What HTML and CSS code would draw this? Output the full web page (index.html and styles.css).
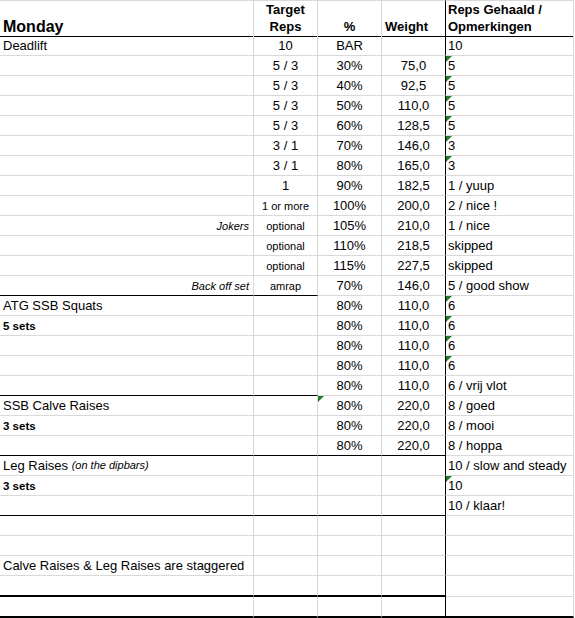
FILE: index.html
```html
<!DOCTYPE html>
<html>
<head>
<meta charset="utf-8">
<link rel="stylesheet" href="styles.css">
</head>
<body>
<div class="sheet">
  <div class="row head">
    <div class="c a title">Monday</div>
    <div class="c b hd ctr">Target<br>Reps</div>
    <div class="c cc hd ctr">%</div>
    <div class="c d hd">Weight</div>
    <div class="c e hd">Reps Gehaald /<br>Opmerkingen</div>
  </div>

  <div class="row">
    <div class="c a">Deadlift</div>
    <div class="c b ctr">10</div>
    <div class="c cc ctr">BAR</div>
    <div class="c d ctr"></div>
    <div class="c e">10</div>
  </div>
  <div class="row">
    <div class="c a"></div>
    <div class="c b ctr">5 / 3</div>
    <div class="c cc ctr">30%</div>
    <div class="c d ctr">75,0</div>
    <div class="c e"><span class="tri"></span>5</div>
  </div>
  <div class="row">
    <div class="c a"></div>
    <div class="c b ctr">5 / 3</div>
    <div class="c cc ctr">40%</div>
    <div class="c d ctr">92,5</div>
    <div class="c e"><span class="tri"></span>5</div>
  </div>
  <div class="row">
    <div class="c a"></div>
    <div class="c b ctr">5 / 3</div>
    <div class="c cc ctr">50%</div>
    <div class="c d ctr">110,0</div>
    <div class="c e"><span class="tri"></span>5</div>
  </div>
  <div class="row">
    <div class="c a"></div>
    <div class="c b ctr">5 / 3</div>
    <div class="c cc ctr">60%</div>
    <div class="c d ctr">128,5</div>
    <div class="c e"><span class="tri"></span>5</div>
  </div>
  <div class="row">
    <div class="c a"></div>
    <div class="c b ctr">3 / 1</div>
    <div class="c cc ctr">70%</div>
    <div class="c d ctr">146,0</div>
    <div class="c e"><span class="tri"></span>3</div>
  </div>
  <div class="row">
    <div class="c a"></div>
    <div class="c b ctr">3 / 1</div>
    <div class="c cc ctr">80%</div>
    <div class="c d ctr">165,0</div>
    <div class="c e"><span class="tri"></span>3</div>
  </div>
  <div class="row">
    <div class="c a"></div>
    <div class="c b ctr">1</div>
    <div class="c cc ctr">90%</div>
    <div class="c d ctr">182,5</div>
    <div class="c e">1 / yuup</div>
  </div>
  <div class="row">
    <div class="c a"></div>
    <div class="c b ctr sm">1 or more</div>
    <div class="c cc ctr">100%</div>
    <div class="c d ctr">200,0</div>
    <div class="c e">2 / nice !</div>
  </div>
  <div class="row">
    <div class="c a rt sm it">Jokers</div>
    <div class="c b ctr sm">optional</div>
    <div class="c cc ctr">105%</div>
    <div class="c d ctr">210,0</div>
    <div class="c e">1 / nice</div>
  </div>
  <div class="row">
    <div class="c a"></div>
    <div class="c b ctr sm">optional</div>
    <div class="c cc ctr">110%</div>
    <div class="c d ctr">218,5</div>
    <div class="c e">skipped</div>
  </div>
  <div class="row">
    <div class="c a"></div>
    <div class="c b ctr sm">optional</div>
    <div class="c cc ctr">115%</div>
    <div class="c d ctr">227,5</div>
    <div class="c e">skipped</div>
  </div>
  <div class="row line-ab">
    <div class="c a rt sm it">Back off set</div>
    <div class="c b ctr sm">amrap</div>
    <div class="c cc ctr">70%</div>
    <div class="c d ctr">146,0</div>
    <div class="c e">5 / good show</div>
  </div>

  <div class="row">
    <div class="c a">ATG SSB Squats</div>
    <div class="c b"></div>
    <div class="c cc ctr">80%</div>
    <div class="c d ctr">110,0</div>
    <div class="c e"><span class="tri"></span>6</div>
  </div>
  <div class="row">
    <div class="c a sm bold">5 sets</div>
    <div class="c b"></div>
    <div class="c cc ctr">80%</div>
    <div class="c d ctr">110,0</div>
    <div class="c e"><span class="tri"></span>6</div>
  </div>
  <div class="row">
    <div class="c a"></div>
    <div class="c b"></div>
    <div class="c cc ctr">80%</div>
    <div class="c d ctr">110,0</div>
    <div class="c e"><span class="tri"></span>6</div>
  </div>
  <div class="row">
    <div class="c a"></div>
    <div class="c b"></div>
    <div class="c cc ctr">80%</div>
    <div class="c d ctr">110,0</div>
    <div class="c e"><span class="tri"></span>6</div>
  </div>
  <div class="row line-ab">
    <div class="c a"></div>
    <div class="c b"></div>
    <div class="c cc ctr">80%</div>
    <div class="c d ctr">110,0</div>
    <div class="c e">6 / vrij vlot</div>
  </div>

  <div class="row">
    <div class="c a">SSB Calve Raises</div>
    <div class="c b"></div>
    <div class="c cc ctr"><span class="tri"></span>80%</div>
    <div class="c d ctr">220,0</div>
    <div class="c e">8 / goed</div>
  </div>
  <div class="row">
    <div class="c a sm bold">3 sets</div>
    <div class="c b"></div>
    <div class="c cc ctr">80%</div>
    <div class="c d ctr">220,0</div>
    <div class="c e">8 / mooi</div>
  </div>
  <div class="row line-ad">
    <div class="c a"></div>
    <div class="c b"></div>
    <div class="c cc ctr">80%</div>
    <div class="c d ctr">220,0</div>
    <div class="c e">8 / hoppa</div>
  </div>

  <div class="row">
    <div class="c a">Leg Raises&nbsp;<span class="note">(on the dipbars)</span></div>
    <div class="c b"></div>
    <div class="c cc"></div>
    <div class="c d"></div>
    <div class="c e">10 / slow and steady</div>
  </div>
  <div class="row">
    <div class="c a sm bold">3 sets</div>
    <div class="c b"></div>
    <div class="c cc"></div>
    <div class="c d"></div>
    <div class="c e"><span class="tri"></span>10</div>
  </div>
  <div class="row line-ad">
    <div class="c a"></div>
    <div class="c b"></div>
    <div class="c cc"></div>
    <div class="c d"></div>
    <div class="c e">10 / klaar!</div>
  </div>

  <div class="row">
    <div class="c a"></div>
    <div class="c b"></div>
    <div class="c cc"></div>
    <div class="c d"></div>
    <div class="c e"></div>
  </div>
  <div class="row">
    <div class="c a"></div>
    <div class="c b"></div>
    <div class="c cc"></div>
    <div class="c d"></div>
    <div class="c e"></div>
  </div>
  <div class="row">
    <div class="c a">Calve Raises &amp; Leg Raises are staggered</div>
    <div class="c b"></div>
    <div class="c cc"></div>
    <div class="c d"></div>
    <div class="c e"></div>
  </div>
  <div class="row tall line2-ad">
    <div class="c a"></div>
    <div class="c b"></div>
    <div class="c cc"></div>
    <div class="c d"></div>
    <div class="c e"></div>
  </div>
  <div class="row tall line2-all">
    <div class="c a"></div>
    <div class="c b"></div>
    <div class="c cc"></div>
    <div class="c d"></div>
    <div class="c e"></div>
  </div>
</div>
</body>
</html>
```

FILE: styles.css
```css
html, body {
  margin: 0;
  padding: 0;
  background: #ffffff;
}

body {
  font-family: "Liberation Sans", Arial, sans-serif;
  font-size: 13px;
  color: #000;
  overflow: hidden;
}

.sheet {
  width: 575px;
}

.row {
  display: grid;
  grid-template-columns: 254px 64px 64px 64px 128px;
  height: 20px;
}

.row.tall {
  height: 21px;
}

.c {
  position: relative;
  box-sizing: border-box;
  display: flex;
  align-items: flex-end;
  justify-content: flex-start;
  border-right: 1px solid #d9d9d9;
  border-bottom: 1px solid #d9d9d9;
  padding: 0 2px 2px 3px;
  line-height: 15px;
  white-space: nowrap;
}

.c.d {
  border-right-color: #000;
}

.c.e {
  padding-left: 2px;
}

.ctr {
  justify-content: center;
  text-align: center;
  padding-left: 1px;
  padding-right: 1px;
}

.rt {
  justify-content: flex-end;
  text-align: right;
  padding-right: 4px;
}

.sm {
  font-size: 11px;
  line-height: 13px;
}

.it {
  font-style: italic;
}

.bold {
  font-weight: bold;
  font-size: 11.5px;
}

.note {
  font-style: italic;
  font-size: 11px;
}

/* header */
.row.head {
  height: 36px;
}

.row.head .c {
  border-top: 1px solid #d9d9d9;
  border-bottom-color: #000;
  padding-bottom: 1px;
}

.title {
  font-size: 16px;
  font-weight: bold;
  line-height: 18px;
}

.row.head .title {
  padding-bottom: 0;
}

.hd {
  font-weight: bold;
  font-size: 13px;
  line-height: 17px;
  white-space: normal;
}

/* black group separators */
.line-ab .a,
.line-ab .b {
  border-bottom-color: #000;
}

.line-ad .a,
.line-ad .b,
.line-ad .cc,
.line-ad .d {
  border-bottom-color: #000;
}

.line2-ad .a,
.line2-ad .b,
.line2-ad .cc,
.line2-ad .d {
  border-bottom: 2px solid #000;
}

.line2-all .c {
  border-bottom: 2px solid #000;
}

/* green indicator triangle */
.tri {
  position: absolute;
  left: 0;
  top: 0;
  width: 6px;
  height: 6px;
  background: #1f7a2a;
  clip-path: polygon(0 0, 100% 0, 0 100%);
}
```
